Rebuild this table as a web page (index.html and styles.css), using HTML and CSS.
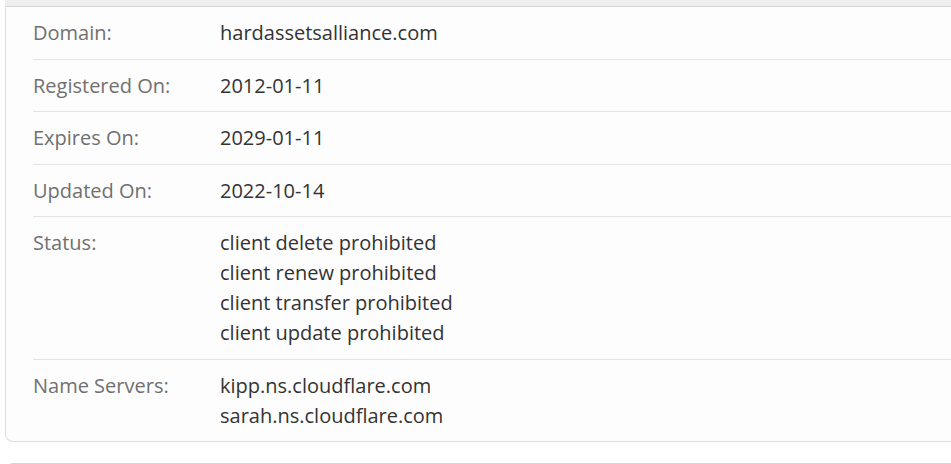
FILE: index.html
```html
<!DOCTYPE html>
<html>
<head>
<meta charset="utf-8">
<link rel="stylesheet" href="styles.css">
</head>
<body>
<div class="page">
  <section class="card">
    <div class="card-head"></div>
    <div class="card-body">
      <div class="row"><div class="label">Domain:</div><div class="value">hardassetsalliance.com</div></div>
      <div class="row"><div class="label">Registered On:</div><div class="value">2012-01-11</div></div>
      <div class="row"><div class="label">Expires On:</div><div class="value">2029-01-11</div></div>
      <div class="row"><div class="label">Updated On:</div><div class="value">2022-10-14</div></div>
      <div class="row"><div class="label">Status:</div><div class="value">client delete prohibited<br>client renew prohibited<br>client transfer prohibited<br>client update prohibited</div></div>
      <div class="row"><div class="label">Name Servers:</div><div class="value">kipp.ns.cloudflare.com<br>sarah.ns.cloudflare.com</div></div>
    </div>
  </section>
  <section class="card next"></section>
</div>
</body>
</html>
```
FILE: styles.css
```css
html, body {
  margin: 0;
  padding: 0;
  background: #ffffff;
  overflow: hidden;
}
body {
  font-family: "Open Sans", "Liberation Sans", sans-serif;
  font-size: 20px;
  line-height: 30px;
}
.page {
  padding-left: 5px;
  height: 464px;
  overflow: hidden;
}
.card {
  border: 1px solid #dcdcdc;
  border-top: none;
  border-right: none;
  border-radius: 0 0 0 8px;
  background: #fdfdfd;
}
.card-head {
  height: 6px;
  background: #efefef;
  border-bottom: 1px solid #d6d6d6;
  margin-left: -1px;
}
.card-body {
  padding-left: 27px;
}
.row {
  display: flex;
  padding: 11px 0 10.5px;
  border-top: 1px solid #e3e3e3;
}
.row:first-child {
  border-top: none;
}
.label {
  width: 187px;
  flex-shrink: 0;
  color: #707070;
}
.value {
  color: #333333;
}
.card.next {
  margin-top: 21px;
  height: 20px;
  border-top: 1px solid #d6d6d6;
  border-bottom: none;
  border-radius: 8px 0 0 0;
  background: #fdfdfd;
}
```
